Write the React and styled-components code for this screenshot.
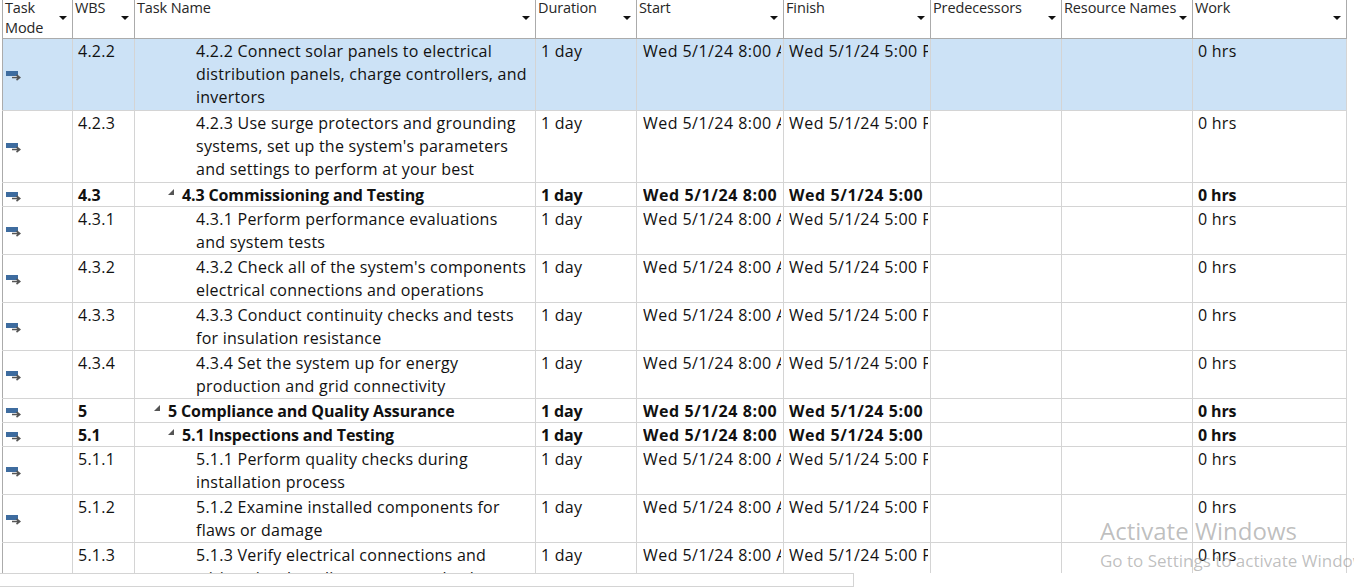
import React from "react";
import styled, { createGlobalStyle } from "styled-components";

const COLS = "71px 62px 401px 101px 147px 147px 131px 131px 154px";

const Global = createGlobalStyle`
  html, body { margin: 0; padding: 0; background: #fff; overflow: hidden; }
  body { font-family: "Open Sans", "Noto Sans", "Liberation Sans", sans-serif; color: #111; }
`;
const Page = styled.div`
  position: relative;
  width: 1354px;
  height: 587px;
  overflow: hidden;
  padding-left: 2px;
  box-sizing: border-box;
`;
const Sheet = styled.div`
  width: 1345px;
  height: 573px;
  overflow: hidden;
`;
const HeaderRow = styled.div`
  display: grid;
  grid-template-columns: ${COLS};
  height: 39px;
  box-sizing: border-box;
  border-bottom: 1px solid #ababab;
`;
const HeaderCell = styled.div`
  position: relative;
  box-sizing: border-box;
  border-left: ${p => (p.$first ? "1px solid #ababab" : "none")};
  border-right: 1px solid #ababab;
  padding: 0 0 0 2px;
  font-size: 14.5px;
  line-height: 20px;
  color: #262626;
  letter-spacing: -0.12px;
`;
const Caret = styled.span`
  position: absolute;
  right: 5px;
  top: 16px;
  width: 0;
  height: 0;
  border-left: 4px solid transparent;
  border-right: 4px solid transparent;
  border-top: 4px solid #111;
`;
const Row = styled.div`
  display: grid;
  grid-template-columns: ${COLS};
  height: ${p => p.$h}px;
  box-sizing: border-box;
  border-bottom: 1px solid #d4d4d4;
  background: ${p => (p.$selected ? "#cce2f6" : "#fff")};
`;
const Cell = styled.div`
  box-sizing: border-box;
  border-right: 1px solid #d4d4d4;
  padding: 1px 5px 0 5px;
  font-size: 16px;
  line-height: 23px;
  font-weight: ${p => (p.$bold ? 700 : 400)};
  letter-spacing: ${p => (p.$bold ? "-0.13px" : "0.25px")};
  overflow: hidden;
  white-space: nowrap;
`;
const ModeCell = styled(Cell)`
  border-left: 1px solid #ababab;
  padding: 0 0 0 3px;
  display: flex;
  align-items: flex-end;
`;
const NameCell = styled(Cell)`
  padding-left: ${p => p.$indent}px;
  white-space: normal;
  position: relative;
`;
const NameLine = styled.div`
  white-space: nowrap;
`;
const Toggle = styled.span`
  position: absolute;
  top: 6px;
  left: ${p => p.$indent - 14}px;
  width: 0;
  height: 0;
  border-bottom: 6px solid #555;
  border-left: 6px solid transparent;
`;
const DateCell = styled(Cell)`
  padding: 1px 0 0 ${p => p.$pad}px;
  letter-spacing: ${p => (p.$bold ? "0.6px" : "0.45px")};
`;
const DateText = styled.div`
  margin-right: 2px;
  overflow: hidden;
`;
const ModeSvg = styled.svg`
  display: block;
  margin-bottom: ${p => p.$mb}px;
`;
const ScrollRail = styled.div`
  position: absolute;
  left: 0;
  top: 573px;
  width: 854px;
  height: 14px;
  box-sizing: border-box;
  border-top: 1px solid #d4d4d4;
  border-right: 1px solid #d4d4d4;
  border-bottom: 1px solid #d4d4d4;
  background: #fff;
`;
const Watermark = styled.div`
  position: absolute;
  left: 1100px;
  top: 515px;
  width: 254px;
  overflow: hidden;
  white-space: nowrap;
  color: rgba(120, 120, 120, 0.48);
  pointer-events: none;
`;
const WatermarkTitle = styled.div`
  font-size: 24px;
  line-height: 32px;
`;
const WatermarkSub = styled.div`
  font-size: 17px;
  line-height: 24px;
  margin-top: 2px;
`;
const HeaderLabel = styled.div`
  margin-top: -2px;
  width: ${p => (p.$narrow ? "40px" : "auto")};
  white-space: ${p => (p.$narrow ? "normal" : "nowrap")};
`;

const ModeIcon = ({ mb }) => (
  <ModeSvg $mb={mb} width="15" height="10" viewBox="0 0 15 10">
    <rect x="0" y="0" width="12" height="5" fill="#3e6c9f" />
    <rect x="6" y="5" width="8" height="1" fill="#fff" />
    <path d="M6 6.5h7.5M10.5 4 L13.7 6.5 L10.5 9" stroke="#555" strokeWidth="1.6" fill="none" />
  </ModeSvg>
);

const HEADERS = ["Task Mode", "WBS", "Task Name", "Duration", "Start", "Finish", "Predecessors", "Resource Names", "Work"];

const rows = [
  { h: 72, wbs: "4.2.2", indent: 61, sel: true, name: ["4.2.2 Connect solar panels to electrical", "distribution panels, charge controllers, and", "invertors"] },
  { h: 72, wbs: "4.2.3", indent: 61, name: ["4.2.3 Use surge protectors and grounding", "systems, set up the system's parameters", "and settings to perform at your best"] },
  { h: 24, wbs: "4.3", indent: 47, bold: true, name: ["4.3 Commissioning and Testing"] },
  { h: 48, wbs: "4.3.1", indent: 61, name: ["4.3.1 Perform performance evaluations", "and system tests"] },
  { h: 48, wbs: "4.3.2", indent: 61, name: ["4.3.2 Check all of the system's components", "electrical connections and operations"] },
  { h: 48, wbs: "4.3.3", indent: 61, name: ["4.3.3 Conduct continuity checks and tests", "for insulation resistance"] },
  { h: 48, wbs: "4.3.4", indent: 61, name: ["4.3.4 Set the system up for energy", "production and grid connectivity"] },
  { h: 24, wbs: "5", indent: 33, bold: true, name: ["5 Compliance and Quality Assurance"] },
  { h: 24, wbs: "5.1", indent: 47, bold: true, name: ["5.1 Inspections and Testing"] },
  { h: 48, wbs: "5.1.1", indent: 61, name: ["5.1.1 Perform quality checks during", "installation process"] },
  { h: 48, wbs: "5.1.2", indent: 61, name: ["5.1.2 Examine installed components for", "flaws or damage"] },
  { h: 48, wbs: "5.1.3", indent: 61, noIcon: true, name: ["5.1.3 Verify electrical connections and", "wiring visual quality assurance check"] },
];

export default function App() {
  return (
    <Page>
      <Global />
      <Sheet>
        <HeaderRow>
          {HEADERS.map((h, i) => (
            <HeaderCell key={h} $first={i === 0}>
              <HeaderLabel $narrow={i === 0}>{h}</HeaderLabel>
              <Caret />
            </HeaderCell>
          ))}
        </HeaderRow>
        {rows.map(r => (
          <Row key={r.wbs} $h={r.h} $selected={r.sel}>
            <ModeCell>{!r.noIcon && <ModeIcon mb={r.h > 48 ? 29 : r.h > 24 ? 17 : 4} />}</ModeCell>
            <Cell $bold={r.bold}>{r.wbs}</Cell>
            <NameCell $indent={r.indent} $bold={r.bold}>
              {r.bold && <Toggle $indent={r.indent} />}
              {r.name.map(l => <NameLine key={l}>{l}</NameLine>)}
            </NameCell>
            <Cell $bold={r.bold}>1 day</Cell>
            <DateCell $pad={6} $bold={r.bold}><DateText>Wed 5/1/24 8:00 AM</DateText></DateCell>
            <DateCell $pad={5} $bold={r.bold}><DateText>Wed 5/1/24 5:00 PM</DateText></DateCell>
            <Cell />
            <Cell />
            <Cell $bold={r.bold}>0 hrs</Cell>
          </Row>
        ))}
      </Sheet>
      <ScrollRail />
      <Watermark>
        <WatermarkTitle>Activate Windows</WatermarkTitle>
        <WatermarkSub>Go to Settings to activate Windows.</WatermarkSub>
      </Watermark>
    </Page>
  );
}
